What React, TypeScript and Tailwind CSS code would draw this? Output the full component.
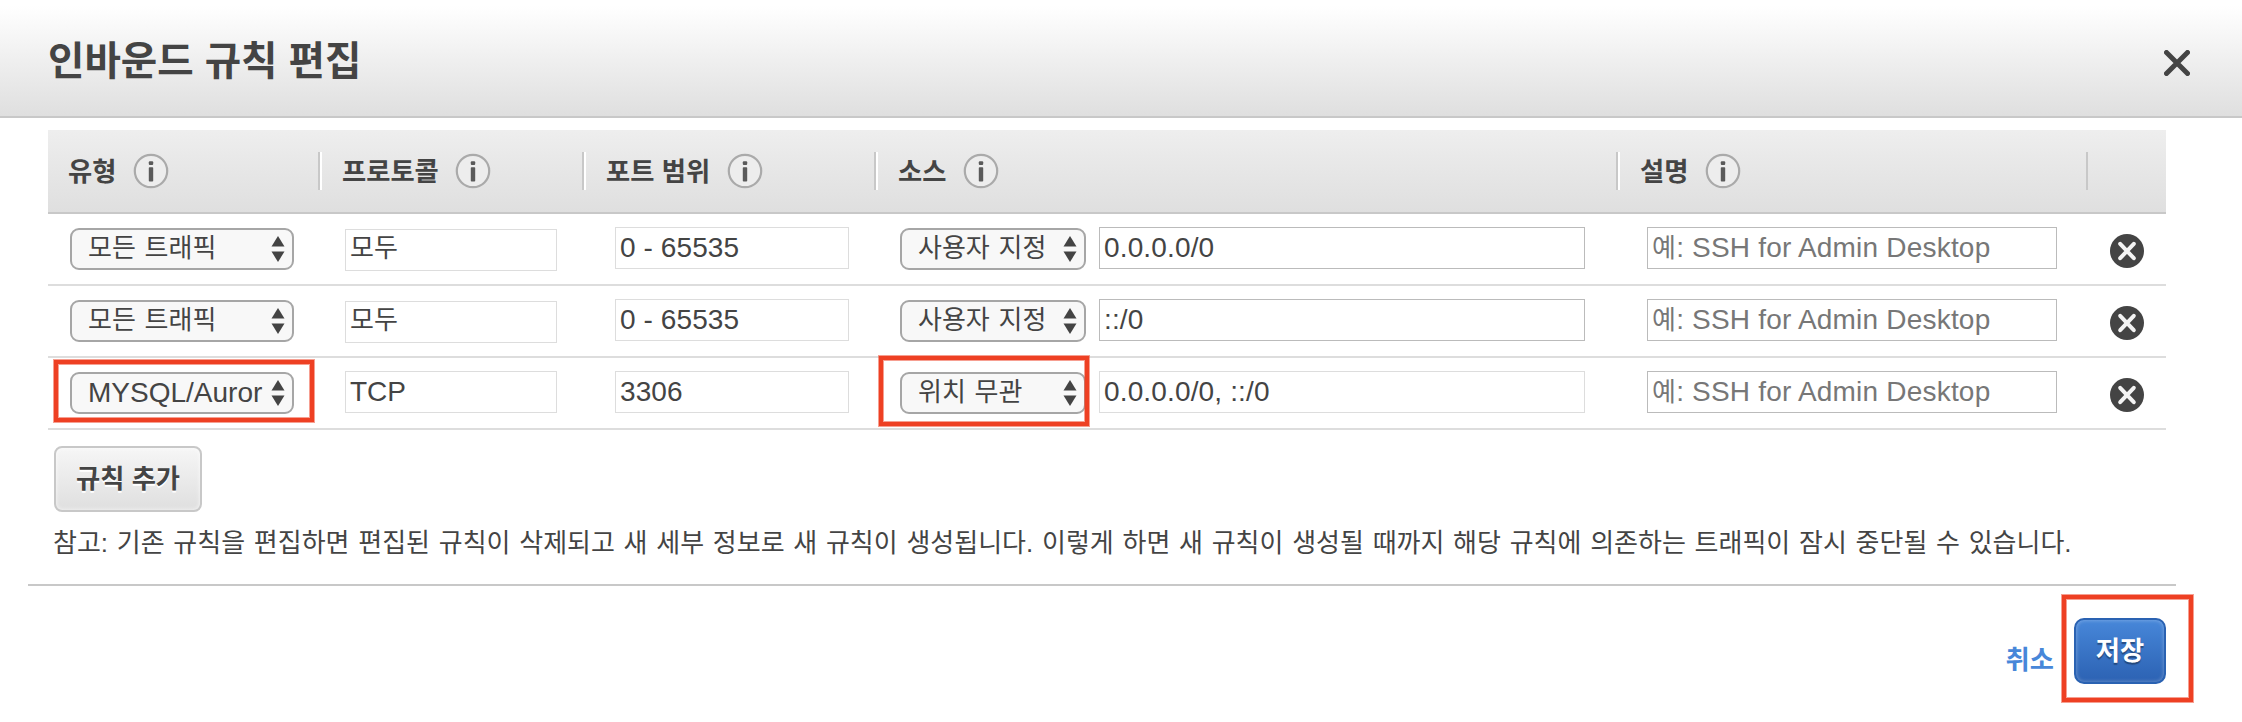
import type { ReactNode } from "react";

const arrowUp = "M8 0 L14.5 10.5 H1.5 Z";
const arrowDown = "M1.5 15.5 H14.5 L8 26 Z";

function InfoIcon() {
  return (
    <svg className="h-[36px] w-[36px] shrink-0" viewBox="0 0 36 36">
      <circle cx="18" cy="18" r="16.2" fill="#ededed" stroke="#aaaaaa" strokeWidth="2.2" />
      <rect x="15.8" y="8.3" width="4.4" height="3.8" rx="1" fill="#5a5a5a" />
      <rect x="15.8" y="14.3" width="4.4" height="14.2" rx="0.8" fill="#5a5a5a" />
    </svg>
  );
}

function HeadCell({ label, text }: { label: string; text: string }) {
  return (
    <div className="flex h-[82px] items-center">
      <span className={`mt-[2px] text-[26.3px] leading-[40px] font-bold whitespace-nowrap ${text}`}>{label}</span>
      <InfoIcon />
    </div>
  );
}

function Divider({ light = true }: { light?: boolean }) {
  return (
    <div className="mt-[22px] flex h-[38px] w-[4px]">
      <div className="w-[2px] bg-[#c8c8c8]" />
      {light && <div className="w-[2px] bg-white" />}
    </div>
  );
}

function Highlight({ place }: { place: string }) {
  return (
    <div
      className={`pointer-events-none absolute z-10 border-[4px] border-[#ee4023] shadow-[0_0_0_1px_rgba(238,64,35,0.5),inset_0_0_0_1px_rgba(238,64,35,0.5)] ${place}`}
    />
  );
}

const korean = "text-[26px] leading-[36px] [word-spacing:1.5px]";
const latin = "text-[28px] leading-[38px]";

function Select({ value, width, font, outline }: { value: string; width: string; font: string; outline?: string }) {
  return (
    <div
      className={`relative flex h-[42px] shrink-0 justify-between rounded-[9px] border-2 border-[#a6a6a6] bg-[#f8f8f8] pr-[6px] pl-[16px] ${width}`}
    >
      <span className={`w-[176px] overflow-hidden whitespace-nowrap ${font}`}>{value}</span>
      <svg className="mt-[6px] h-[26px] w-[16px] shrink-0" viewBox="0 0 16 26">
        <path d={arrowUp} fill="#444" />
        <path d={arrowDown} fill="#444" />
      </svg>
      {outline && <Highlight place={outline} />}
    </div>
  );
}

function Field({ children, className }: { children: ReactNode; className: string }) {
  return <div className={`h-[42px] shrink-0 border bg-white pl-[4px] whitespace-nowrap ${className}`}>{children}</div>;
}

function DeleteIcon() {
  return (
    <svg className="mt-[20px] ml-[24px] h-[34px] w-[34px]" viewBox="0 0 34 34">
      <circle cx="17" cy="17" r="17" fill="#444" />
      <path d="M10.2 9.8 L23.8 24.2 M23.8 9.8 L10.2 24.2" stroke="#f4f4f4" strokeWidth="4" strokeLinecap="round" />
    </svg>
  );
}

type Rule = {
  type: string;
  typeFont: string;
  protocol: string;
  protocolStyle: string;
  port: string;
  source: string;
  cidr: string;
  cidrBorder: string;
  typeOutline?: string;
  sourceOutline?: string;
};

const rules: Rule[] = [
  {
    type: "모든 트래픽",
    typeFont: korean,
    protocol: "모두",
    protocolStyle: "mt-[15px] text-[26px] leading-[36px]",
    port: "0 - 65535",
    source: "사용자 지정",
    cidr: "0.0.0.0/0",
    cidrBorder: "border-[#bbbbbb]",
  },
  {
    type: "모든 트래픽",
    typeFont: korean,
    protocol: "모두",
    protocolStyle: "mt-[15px] text-[26px] leading-[36px]",
    port: "0 - 65535",
    source: "사용자 지정",
    cidr: "::/0",
    cidrBorder: "border-[#bbbbbb]",
  },
  {
    type: "MYSQL/Auror",
    typeFont: latin,
    protocol: "TCP",
    protocolStyle: "mt-[13px] text-[28px] leading-[40px]",
    port: "3306",
    source: "위치 무관",
    cidr: "0.0.0.0/0, ::/0",
    cidrBorder: "border-[#dddddd]",
    typeOutline: "top-[-14px] left-[-18px] h-[62px] w-[260px]",
    sourceOutline: "top-[-18px] left-[-23px] h-[70px] w-[210px]",
  },
];

const columns = "grid grid-cols-[270px_264px_292px_742px_470px_80px]";

export default function App() {
  return (
    <div
      lang="ko"
      className="h-[722px] w-[2242px] overflow-hidden bg-white font-['Liberation_Sans','Noto_Sans_CJK_KR',sans-serif] text-[#444444]"
    >
      <header className="flex h-[118px] items-start justify-between border-b-2 border-[#c8c8c8] bg-linear-to-b from-white from-5% to-[#dfdfdf] pr-[52px] pl-[48px]">
        <h1 className="mt-[36px] text-[39.6px] leading-[50px] font-bold">인바운드 규칙 편집</h1>
        <svg className="mt-[50px] h-[26px] w-[26px]" viewBox="0 0 26 26">
          <path d="M2.5 2.5 L23.5 23.5 M23.5 2.5 L2.5 23.5" stroke="#444" strokeWidth="5" strokeLinecap="round" />
        </svg>
      </header>

      <section className="mt-[12px] ml-[48px] w-[2118px]">
        <div className={`${columns} h-[84px] border-b-2 border-[#c8c8c8] bg-linear-to-b from-[#eeeeee] to-[#dfdfdf]`}>
          <HeadCell label="유형" text="ml-[20px] w-[65px]" />
          <div className="flex">
            <Divider />
            <HeadCell label="프로토콜" text="ml-[20px] w-[113px]" />
          </div>
          <div className="flex">
            <Divider />
            <HeadCell label="포트 범위" text="ml-[20px] w-[121px]" />
          </div>
          <div className="flex">
            <Divider />
            <HeadCell label="소스" text="ml-[20px] w-[65px]" />
          </div>
          <div className="flex">
            <Divider />
            <HeadCell label="설명" text="ml-[20px] w-[65px]" />
          </div>
          <div className="flex">
            <Divider light={false} />
          </div>
        </div>

        {rules.map((rule, i) => (
          <div key={i} className={`${columns} h-[72px] border-b-2 border-[#dddddd]`}>
            <div className="mt-[14px] ml-[22px]">
              <Select value={rule.type} font={rule.typeFont} width="w-[224px]" outline={rule.typeOutline} />
            </div>
            <Field className={`ml-[27px] w-[212px] border-[#dddddd] ${rule.protocolStyle}`}>{rule.protocol}</Field>
            <Field className="mt-[13px] ml-[33px] w-[234px] border-[#dddddd] text-[28px] leading-[40px] tracking-[0.1px]">
              {rule.port}
            </Field>
            <div className="flex">
              <div className="mt-[14px] ml-[26px]">
                <Select value={rule.source} font={korean} width="w-[186px]" outline={rule.sourceOutline} />
              </div>
              <Field
                className={`mt-[13px] ml-[13px] w-[486px] text-[28px] leading-[40px] tracking-[0.15px] ${rule.cidrBorder}`}
              >
                {rule.cidr}
              </Field>
            </div>
            <Field className="mt-[13px] ml-[31px] w-[410px] border-[#bbbbbb] text-[28px] leading-[40px] tracking-[0.2px] text-[#777777]">
              <span className="text-[26px]">예</span>: SSH for Admin Desktop
            </Field>
            <DeleteIcon />
          </div>
        ))}
      </section>

      <button className="mt-[16px] ml-[54px] block h-[66px] w-[148px] rounded-[8px] border-2 border-[#c8c8c8] bg-linear-to-b from-[#f6f6f6] to-[#dfdfdf] text-[26.3px] leading-[63px] font-bold shadow-[inset_0_0_4px_rgba(255,255,255,0.8)] [text-shadow:0_2px_0_#fff]">
        규칙 추가
      </button>
      <p className="mt-[10px] ml-[53px] text-[26px] leading-[42px] whitespace-nowrap [word-spacing:1.5px]">
        참고: 기존 규칙을 편집하면 편집된 규칙이 삭제되고 새 세부 정보로 새 규칙이 생성됩니다. 이렇게 하면 새 규칙이 생성될 때까지 해당 규칙에 의존하는 트래픽이 잠시 중단될 수 있습니다.
      </p>

      <footer className="mt-[20px] ml-[28px] flex w-[2148px] items-start justify-end border-t-2 border-[#c8c8c8] pr-[10px]">
        <a className="mt-[54px] mr-[20px] text-[26.3px] leading-[40px] font-bold text-[#4787d9]">취소</a>
        <div className="relative mt-[32px]">
          <button className="block h-[66px] w-[92px] rounded-[10px] border-2 border-[#2a62b2] bg-linear-to-b from-[#4787d9] to-[#2c62b3] text-[26.3px] leading-[63px] font-bold text-white shadow-[inset_0_0_4px_rgba(255,255,255,0.35)] [text-shadow:0_2px_1px_rgba(0,0,0,0.35)]">
            저장
          </button>
          <Highlight place="top-[-23px] left-[-12px] h-[107px] w-[131px]" />
        </div>
      </footer>
    </div>
  );
}
